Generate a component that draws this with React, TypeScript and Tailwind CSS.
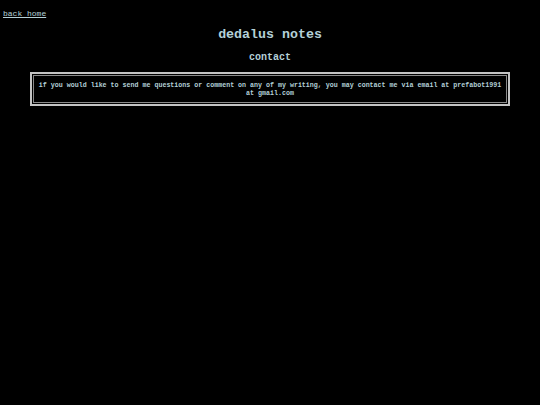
import React from 'react';

const App: React.FC = () => {
  return (
    <div className="min-h-[405px] w-full bg-black text-[#b4d0d8] font-['Liberation_Mono',monospace]">
      <div className="px-[3px] pt-[7px] leading-[10px]">
        <a href="#" className="text-[8px] leading-[10px] underline">
          back home
        </a>
      </div>

      <h1 className="mt-[9px] text-center text-[13.3px] leading-[14px] font-bold">dedalus notes</h1>
      <h2 className="mt-[10px] text-center text-[10px] leading-[12px] font-bold">contact</h2>

      <div className="mx-[30px] mt-[8px] border-2 border-[#c4c4c4] p-px">
        <div className="border border-[#8a8a8a] py-[5px] text-center text-[6.65px] leading-[8px] font-bold">
          if you would like to send me questions or comment on any of my writing, you may contact me via email at
          prefabot1991 at gmail.com
        </div>
      </div>
    </div>
  );
};

export default App;
